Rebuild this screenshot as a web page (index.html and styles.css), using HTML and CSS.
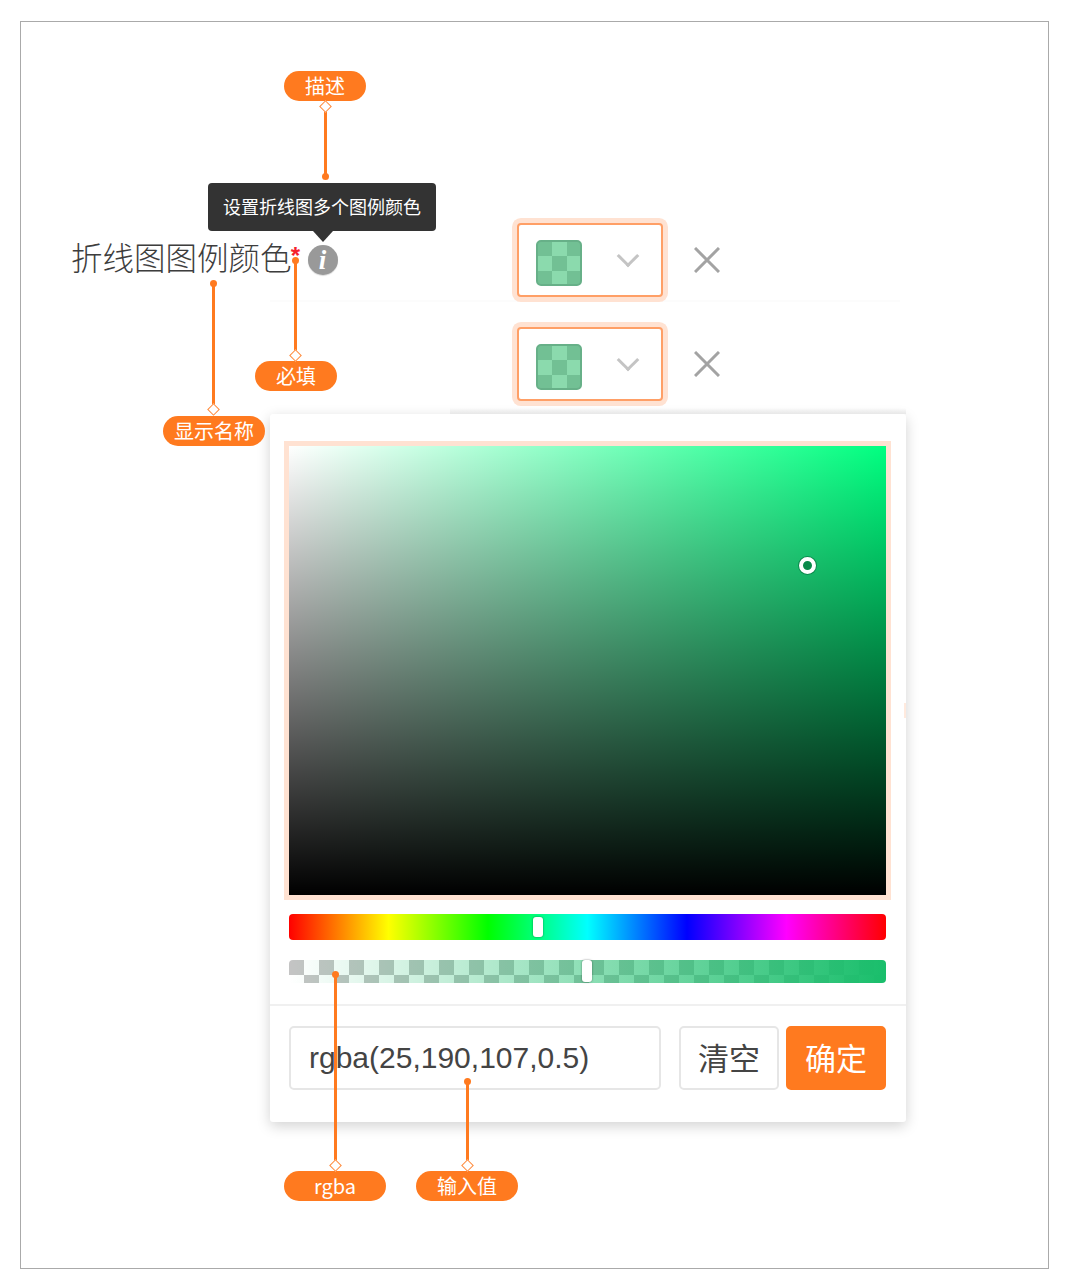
FILE: index.html
```html
<!DOCTYPE html>
<html lang="zh-CN">
<head>
  <meta charset="UTF-8">
  <title>颜色选择器</title>
  <link rel="stylesheet" href="styles.css">
</head>
<body>

  <div class="frame">

    <span class="row-line"></span>

    <!-- 表单行 -->
    <div class="row">
      <div class="field-name">
        <span class="field-text">折线图图例颜色</span>
        <span class="field-star">*</span>
        <span class="field-info">i</span>
      </div>
      <div class="select"><span class="swatch"></span><span class="chevron"></span></div>
      <svg class="remove" viewBox="0 0 26 26"><path d="M1 1L25 25M25 1L1 25"/></svg>
    </div>

    <div class="row row-second">
      <div class="select"><span class="swatch"></span><span class="chevron"></span></div>
      <svg class="remove" viewBox="0 0 26 26"><path d="M1 1L25 25M25 1L1 25"/></svg>
    </div>

    <!-- 颜色面板 -->
    <div class="panel">
      <div class="panel-body">
        <div class="saturation">
          <span class="saturation-thumb"></span>
        </div>
        <div class="hue-bar"><span class="bar-thumb hue-thumb"></span></div>
        <div class="alpha-bar"><span class="bar-thumb alpha-thumb"></span></div>
      </div>
      <div class="panel-footer">
        <div class="value-input">rgba(25,190,107,0.5)</div>
        <button class="btn btn-clear">清空</button>
        <button class="btn btn-ok">确定</button>
      </div>
    </div>

    <div class="tooltip">设置折线图多个图例颜色</div>

    <!-- 标注 -->
    <span class="leader leader-down leader-desc"></span>
    <span class="leader leader-up leader-required"></span>
    <span class="leader leader-up leader-name"></span>
    <span class="leader leader-up leader-rgba"></span>
    <span class="leader leader-up leader-value"></span>

    <span class="tag tag-desc">描述</span>
    <span class="tag tag-required">必填</span>
    <span class="tag tag-name">显示名称</span>
    <span class="tag tag-rgba">rgba</span>
    <span class="tag tag-value">输入值</span>
  </div>

</body>
</html>
```

FILE: styles.css
```css
body {
  margin: 0;
  background: #fff;
  font-family: "Noto Sans CJK SC", "Liberation Sans", sans-serif;
}

.frame {
  position: relative;
  box-sizing: border-box;
  width: 1029px;
  height: 1248px;
  margin: 21px 0 0 20px;
  padding: 201px 0 0 51px;
  border: 1px solid #aaa;
}

.row-line {
  position: absolute;
  left: 249px;
  top: 278px;
  width: 630px;
  height: 2px;
  background: #fcfcfc;
}

/* 表单行 */
.row {
  display: flex;
  align-items: center;
  height: 74px;
}

.row-second {
  margin-top: 30px;
  padding-left: 445px;
}

.field-name {
  display: flex;
  align-items: center;
  width: 445px;
  height: 74px;
}

.field-text {
  font-size: 31.5px;
  line-height: 40px;
  font-weight: 300;
  color: #3d3d3d;
  margin: 0 0 8px -1px;
  white-space: nowrap;
}

.field-star {
  width: 10px;
  margin: 0 0 8px -1px;
  font-family: "Liberation Sans", sans-serif;
  font-size: 24px;
  font-weight: bold;
  line-height: 24px;
  color: #f5222d;
  text-align: center;
}

.field-info {
  width: 30px;
  height: 30px;
  margin-left: 7px;
  border-radius: 50%;
  background: #999;
  box-shadow: 0 1px 1px rgba(0, 0, 0, 0.15);
  font-family: "Liberation Serif", serif;
  font-size: 27px;
  font-style: italic;
  font-weight: bold;
  line-height: 30px;
  color: #fff;
  text-align: center;
}

.select {
  position: relative;
  box-sizing: border-box;
  display: flex;
  align-items: center;
  width: 146px;
  height: 74px;
  padding-left: 17px;
  border: 2px solid #ff9f66;
  border-radius: 4px;
  box-shadow: 0 0 0 5px #ffe2d2;
  background: #fff;
}

.swatch {
  box-sizing: border-box;
  width: 46px;
  height: 46px;
  margin-top: 6px;
  border: 2px solid #67b088;
  border-radius: 5px;
  background: repeating-conic-gradient(#8bdaad 0 25%, #72c094 0 50%) -1px -1px / 30px 30px;
}

.chevron {
  width: 13px;
  height: 13px;
  margin: -8px 0 0 38px;
  border-right: 3px solid #c4c4c4;
  border-bottom: 3px solid #c4c4c4;
  transform: rotate(45deg);
}

.remove {
  width: 26px;
  height: 26px;
  margin-left: 31px;
  fill: none;
  stroke: #a3a3a3;
  stroke-width: 3;
}

/* 颜色面板 */
.panel {
  position: relative;
  box-sizing: border-box;
  width: 636px;
  height: 708px;
  margin: 13px 0 0 198px;
  border-radius: 3px;
  background: #fff;
  box-shadow: 0 4px 14px rgba(0, 0, 0, 0.18);
}

.panel::before {
  content: "";
  position: absolute;
  top: -6px;
  left: 180px;
  right: 0;
  height: 6px;
  background: linear-gradient(rgba(225, 225, 225, 0), #e8e8e8);
}

.panel::after {
  content: "";
  position: absolute;
  top: 289px;
  right: 0;
  width: 2px;
  height: 15px;
  background: #ffeade;
}

.panel-body {
  padding: 32px 20px 0 19px;
}

.saturation {
  position: relative;
  width: 597px;
  height: 449px;
  background:
    linear-gradient(to top, #000, rgba(0, 0, 0, 0)),
    linear-gradient(to right, #fff, rgba(255, 255, 255, 0)),
    #00ff80;
  box-shadow: 0 0 0 5px #ffe2d2;
}

.saturation-thumb {
  position: absolute;
  left: 510px;
  top: 111px;
  box-sizing: border-box;
  width: 17px;
  height: 17px;
  border: 4px solid #fff;
  border-radius: 50%;
  background: #0a8a4a;
  box-shadow: 0 0 0 1px #0d8a4d;
}

.hue-bar {
  position: relative;
  height: 26px;
  margin-top: 19px;
  border-radius: 4px;
  background: linear-gradient(to right, #f00 0%, #ff0 16.66%, #0f0 33.33%, #0ff 50%, #00f 66.66%, #f0f 83.33%, #f00 100%);
}

.alpha-bar {
  position: relative;
  height: 23px;
  margin-top: 20px;
  border-radius: 4px;
  background:
    linear-gradient(to right, rgba(25, 190, 107, 0), rgb(25, 190, 107)),
    repeating-conic-gradient(#fff 0 25%, #c4c4c4 0 50%) 0 0 / 30px 30px;
}

.bar-thumb {
  position: absolute;
  top: 3px;
  width: 10px;
  height: 20px;
  border-radius: 3px;
  background: #fff;
  box-shadow: 0 0 2px rgba(0, 0, 0, 0.5);
}

.hue-thumb {
  left: 244px;
}

.alpha-thumb {
  left: 293px;
  top: 0;
  height: 22px;
}

.panel-footer {
  position: absolute;
  left: 0;
  right: 0;
  bottom: 0;
  display: flex;
  height: 118px;
  padding: 20px 20px 0 19px;
  box-sizing: border-box;
  border-top: 2px solid #f0f0f0;
}

.value-input {
  box-sizing: border-box;
  width: 372px;
  height: 64px;
  padding-left: 18px;
  border: 2px solid #e6e6e6;
  border-radius: 5px;
  font-family: "Liberation Sans", sans-serif;
  font-size: 30px;
  line-height: 60px;
  color: #444;
  white-space: nowrap;
}

.btn {
  box-sizing: border-box;
  width: 100px;
  height: 64px;
  padding: 0 0 4px;
  border: 2px solid #e6e6e6;
  border-radius: 5px;
  background: #fff;
  font-family: "Noto Sans CJK SC", sans-serif;
  font-size: 31px;
  color: #444;
}

.btn-clear {
  margin-left: 18px;
}

.btn-ok {
  margin-left: 7px;
  border-color: #ff7a1f;
  background: #ff7a1f;
  color: #fff;
}

.tooltip {
  position: absolute;
  left: 187px;
  top: 161px;
  width: 228px;
  height: 48px;
  border-radius: 4px;
  background: #333;
  font-size: 18px;
  line-height: 47px;
  color: #fff;
  text-align: center;
  white-space: nowrap;
}

.tooltip::after {
  content: "";
  position: absolute;
  left: 105px;
  top: 48px;
  border-style: solid;
  border-width: 11px 10px 0;
  border-color: #333 transparent transparent;
}

/* 标注 */
.leader {
  position: absolute;
  width: 3px;
  background: #ff7a1f;
  z-index: 2;
}

.leader::before {
  content: "";
  position: absolute;
  left: -2px;
  width: 7px;
  height: 7px;
  border-radius: 50%;
  background: #ff7a1f;
}

.leader::after {
  content: "";
  position: absolute;
  left: -3px;
  box-sizing: border-box;
  width: 9px;
  height: 9px;
  border: 1px solid #ff8a3c;
  background: #fff;
  transform: rotate(45deg);
}

.leader-down::before { bottom: -3px; }
.leader-down::after { top: -4px; }
.leader-up::before { top: -3px; }
.leader-up::after { bottom: -4px; }

.leader-desc { left: 303px; top: 84px; height: 71px; }
.leader-required { left: 273px; top: 238px; height: 96px; }
.leader-name { left: 191px; top: 261px; height: 127px; }
.leader-rgba { left: 313px; top: 952px; height: 192px; }
.leader-value { left: 445px; top: 1059px; height: 85px; }

.tag {
  position: absolute;
  width: 102px;
  height: 30px;
  border-radius: 15px;
  background: #ff7a1f;
  font-size: 20px;
  line-height: 29px;
  color: #fff;
  text-align: center;
  white-space: nowrap;
}

.tag-desc { left: 263px; top: 49px; width: 82px; }
.tag-required { left: 234px; top: 339px; width: 82px; }
.tag-name { left: 142px; top: 394px; }
.tag-rgba { left: 263px; top: 1149px; }
.tag-value { left: 395px; top: 1149px; }
```
